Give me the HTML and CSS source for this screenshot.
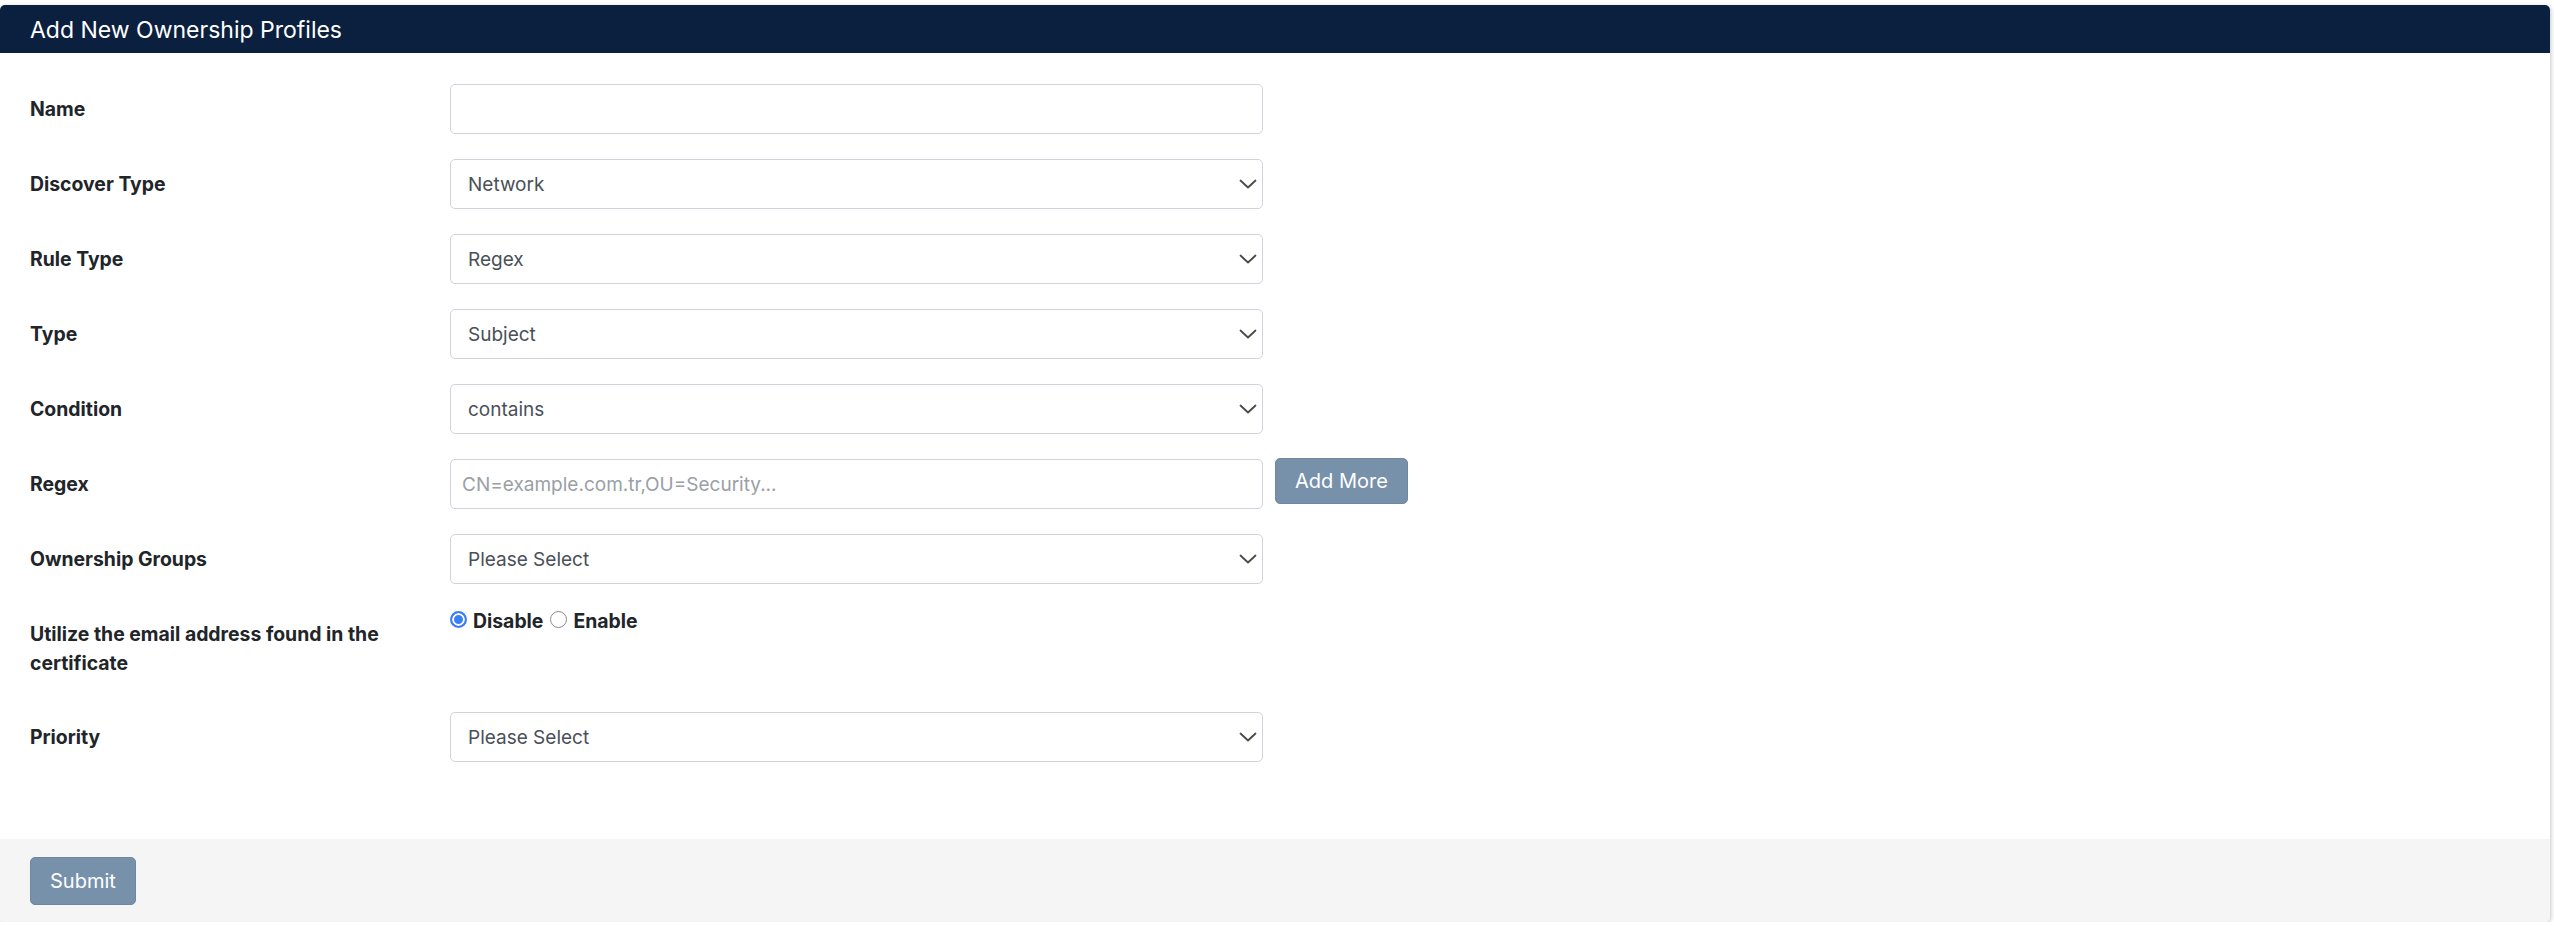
FILE: index.html
```html
<!DOCTYPE html>
<html lang="en">
<head>
<meta charset="utf-8">
<title>Add New Ownership Profiles</title>
<link rel="stylesheet" href="styles.css">
</head>
<body>
<div class="card">
  <div class="card-header">Add New Ownership Profiles</div>
  <form class="card-body">
    <label class="form-label" for="name">Name</label>
    <div class="control"><input class="field" id="name" type="text"></div>

    <label class="form-label" for="discover">Discover Type</label>
    <div class="control select-wrap">
      <select class="field select" id="discover"><option>Network</option></select>
      <svg class="chevron" width="18" height="10" viewBox="0 0 18 10"><polyline points="1.5,1.5 9,8.5 16.5,1.5" fill="none" stroke="#4a4a4a" stroke-width="1.8" stroke-linecap="round" stroke-linejoin="round"/></svg>
    </div>

    <label class="form-label" for="ruletype">Rule Type</label>
    <div class="control select-wrap">
      <select class="field select" id="ruletype"><option>Regex</option></select>
      <svg class="chevron" width="18" height="10" viewBox="0 0 18 10"><polyline points="1.5,1.5 9,8.5 16.5,1.5" fill="none" stroke="#4a4a4a" stroke-width="1.8" stroke-linecap="round" stroke-linejoin="round"/></svg>
    </div>

    <label class="form-label" for="type">Type</label>
    <div class="control select-wrap">
      <select class="field select" id="type"><option>Subject</option></select>
      <svg class="chevron" width="18" height="10" viewBox="0 0 18 10"><polyline points="1.5,1.5 9,8.5 16.5,1.5" fill="none" stroke="#4a4a4a" stroke-width="1.8" stroke-linecap="round" stroke-linejoin="round"/></svg>
    </div>

    <label class="form-label" for="condition">Condition</label>
    <div class="control select-wrap">
      <select class="field select" id="condition"><option>contains</option></select>
      <svg class="chevron" width="18" height="10" viewBox="0 0 18 10"><polyline points="1.5,1.5 9,8.5 16.5,1.5" fill="none" stroke="#4a4a4a" stroke-width="1.8" stroke-linecap="round" stroke-linejoin="round"/></svg>
    </div>

    <label class="form-label" for="regex">Regex</label>
    <div class="control regex-row">
      <input class="field" id="regex" type="text" placeholder="CN=example.com.tr,OU=Security...">
      <button type="button" class="btn btn-add">Add More</button>
    </div>

    <label class="form-label" for="groups">Ownership Groups</label>
    <div class="control select-wrap">
      <select class="field select" id="groups"><option>Please Select</option></select>
      <svg class="chevron" width="18" height="10" viewBox="0 0 18 10"><polyline points="1.5,1.5 9,8.5 16.5,1.5" fill="none" stroke="#4a4a4a" stroke-width="1.8" stroke-linecap="round" stroke-linejoin="round"/></svg>
    </div>

    <div class="form-label">Utilize the email address found in the certificate</div>
    <div class="control radios">
      <input type="radio" class="radio" name="email" id="r-disable" checked><label class="radio-label" for="r-disable">Disable</label>
      <input type="radio" class="radio" name="email" id="r-enable"><label class="radio-label" for="r-enable">Enable</label>
    </div>

    <label class="form-label" for="priority">Priority</label>
    <div class="control select-wrap">
      <select class="field select" id="priority"><option>Please Select</option></select>
      <svg class="chevron" width="18" height="10" viewBox="0 0 18 10"><polyline points="1.5,1.5 9,8.5 16.5,1.5" fill="none" stroke="#4a4a4a" stroke-width="1.8" stroke-linecap="round" stroke-linejoin="round"/></svg>
    </div>
  </form>
  <div class="card-footer">
    <button type="button" class="btn btn-submit">Submit</button>
  </div>
</div>
</body>
</html>
```

FILE: styles.css
```css
* {
  box-sizing: border-box;
}

html, body {
  margin: 0;
  padding: 0;
  background: #ffffff;
}

body {
  font-family: Inter, "Liberation Sans", sans-serif;
  color: #212529;
  padding-top: 5px;
}

.card {
  width: 2550px;
  background: #ffffff;
  border-radius: 5px;
  overflow: hidden;
  box-shadow: 1px 1px 4px rgba(0, 0, 0, 0.22);
}

.card-header {
  height: 48px;
  background: #0b1f3e;
  color: #ffffff;
  font-size: 23px;
  line-height: 28px;
  padding: 11px 30px 9px 30px;
}

.card-body {
  display: grid;
  grid-template-columns: 420px 1fr;
  row-gap: 25px;
  padding: 31px 30px 77px 30px;
  margin: 0;
}

.form-label {
  font-size: 19.4px;
  font-weight: 700;
  line-height: 29px;
  padding: 11px 30px 9px 0;
  color: #212529;
}

.control {
  position: relative;
  width: 813px;
}

.field {
  display: block;
  width: 813px;
  height: 50px;
  border: 1px solid #cfd4da;
  border-radius: 5px;
  background: #ffffff;
  font-family: Inter, "Liberation Sans", sans-serif;
  font-size: 19px;
  color: #495057;
  padding: 0 11px;
  outline: none;
}

.field::placeholder {
  color: #9aa0a6;
}

.select {
  appearance: none;
  -webkit-appearance: none;
  padding-left: 17px;
}

.chevron {
  position: absolute;
  right: 6px;
  top: 20px;
  pointer-events: none;
}

.regex-row {
  display: flex;
  align-items: flex-start;
  gap: 12px;
  width: auto;
}

.regex-row .field {
  flex: 0 0 813px;
}

.btn {
  font-family: Inter, "Liberation Sans", sans-serif;
  font-size: 20px;
  color: #ffffff;
  background: #7791ab;
  border: 1px solid #6f889f;
  border-radius: 5px;
  padding: 0 19px;
  cursor: pointer;
}

.btn-add {
  height: 46px;
  margin-top: -1px;
}

.btn-submit {
  height: 48px;
}

.radios {
  display: flex;
  align-items: center;
  height: 25px;
  line-height: 25px;
  margin-top: 0;
}

.radio {
  appearance: none;
  -webkit-appearance: none;
  width: 17px;
  height: 17px;
  margin: 0 6px 0 0;
  border-radius: 50%;
  border: 1px solid #8a8a8a;
  background: #ffffff;
  position: relative;
  top: -2px;
}

.radio:checked {
  border: 2px solid #3b7df5;
  background: #3b7df5;
  box-shadow: inset 0 0 0 2px #ffffff;
}

.radio-label {
  font-size: 19.4px;
  font-weight: 700;
  color: #212529;
  margin-right: 7px;
}

.card-footer {
  height: 83px;
  background: #f5f5f5;
  padding: 18px 30px 17px 30px;
}
```
